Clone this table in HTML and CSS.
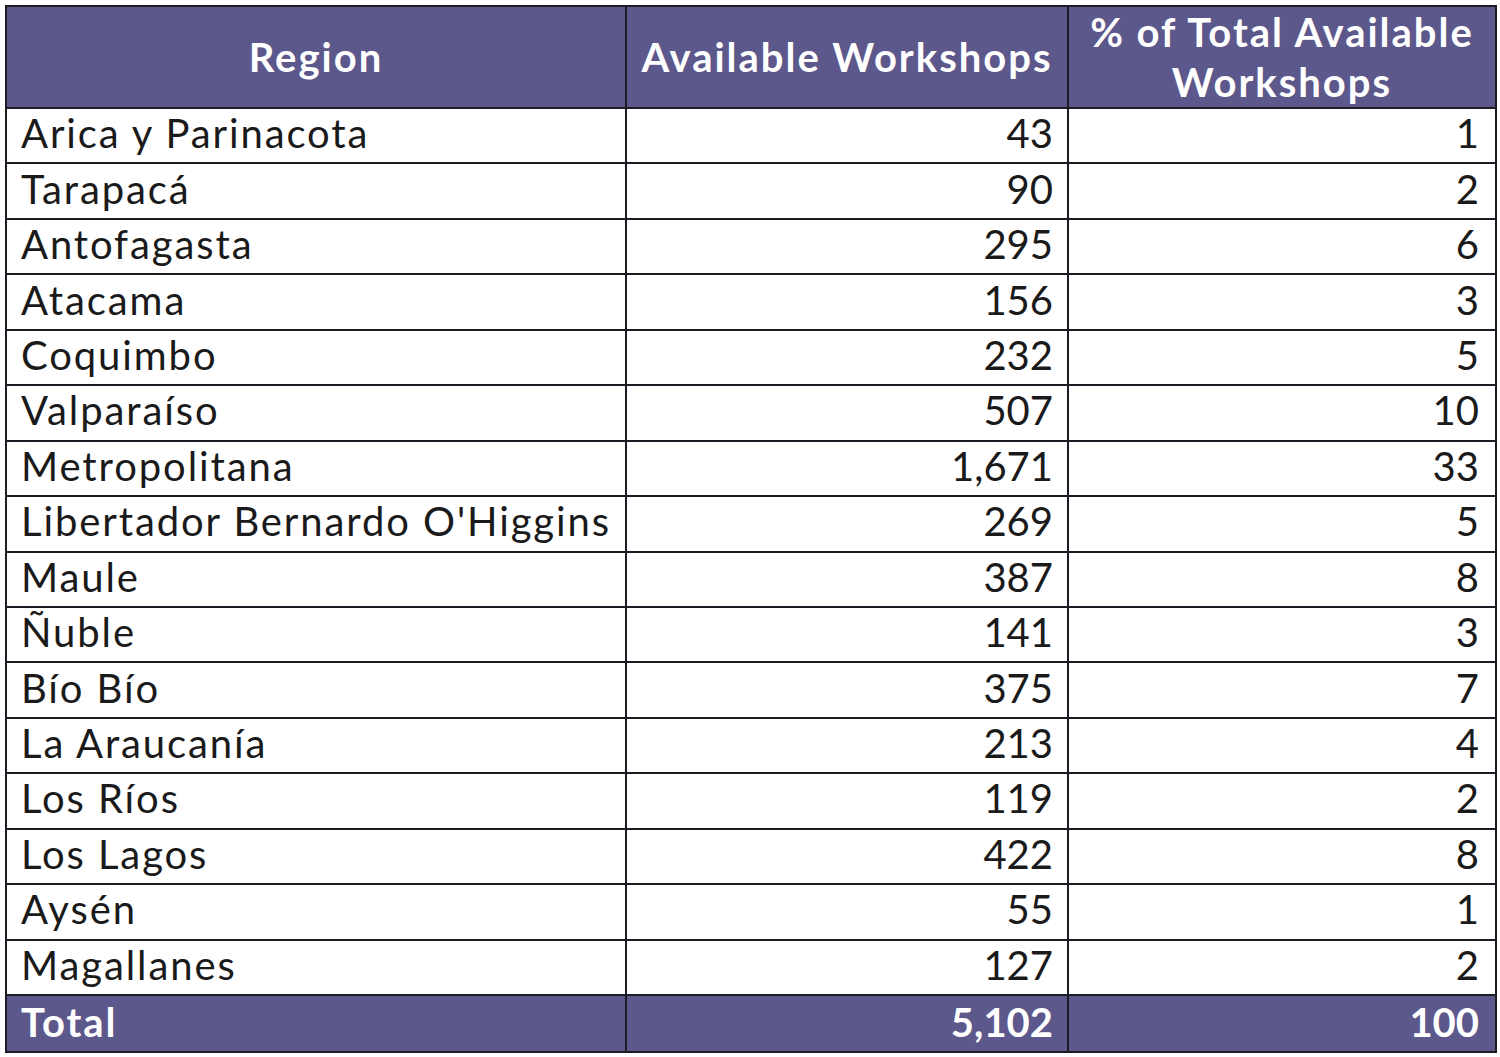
FILE: index.html
```html
<!DOCTYPE html>
<html>
<head>
<meta charset="utf-8">
<link rel="stylesheet" href="styles.css">
</head>
<body>
<table class="tbl">
  <colgroup>
    <col class="c1"><col class="c2"><col class="c3">
  </colgroup>
  <thead>
    <tr class="head">
      <th>Region</th>
      <th>Available Workshops</th>
      <th>% of Total Available Workshops</th>
    </tr>
  </thead>
  <tbody>
    <tr><td>Arica y Parinacota</td><td class="num">43</td><td class="num">1</td></tr>
    <tr><td>Tarapacá</td><td class="num">90</td><td class="num">2</td></tr>
    <tr><td>Antofagasta</td><td class="num">295</td><td class="num">6</td></tr>
    <tr><td>Atacama</td><td class="num">156</td><td class="num">3</td></tr>
    <tr><td>Coquimbo</td><td class="num">232</td><td class="num">5</td></tr>
    <tr><td>Valparaíso</td><td class="num">507</td><td class="num">10</td></tr>
    <tr><td>Metropolitana</td><td class="num">1,671</td><td class="num">33</td></tr>
    <tr><td>Libertador Bernardo O'Higgins</td><td class="num">269</td><td class="num">5</td></tr>
    <tr><td>Maule</td><td class="num">387</td><td class="num">8</td></tr>
    <tr><td>Ñuble</td><td class="num">141</td><td class="num">3</td></tr>
    <tr><td>Bío Bío</td><td class="num">375</td><td class="num">7</td></tr>
    <tr><td>La Araucanía</td><td class="num">213</td><td class="num">4</td></tr>
    <tr><td>Los Ríos</td><td class="num">119</td><td class="num">2</td></tr>
    <tr><td>Los Lagos</td><td class="num">422</td><td class="num">8</td></tr>
    <tr><td>Aysén</td><td class="num">55</td><td class="num">1</td></tr>
    <tr><td>Magallanes</td><td class="num">127</td><td class="num">2</td></tr>
  </tbody>
  <tfoot>
    <tr class="total"><td>Total</td><td class="num">5,102</td><td class="num">100</td></tr>
  </tfoot>
</table>
</body>
</html>
```
FILE: styles.css
```css
html, body {
  margin: 0;
  padding: 0;
  background: #ffffff;
}
body {
  padding: 5px;
  font-family: "Lato", "DejaVu Sans", sans-serif;
  color: #1a1a1a;
}
.tbl {
  border-collapse: collapse;
  table-layout: fixed;
  width: 1490px;
}
.c1 { width: 620px; }
.c2 { width: 442px; }
.c3 { width: 428px; }
.tbl th, .tbl td {
  border: 2px solid #1c1c24;
  overflow: hidden;
  white-space: nowrap;
}
.tbl td {
  font-size: 40px;
  letter-spacing: 1.9px;
  height: 48.44px;
  line-height: 44px;
  padding: 0 14px 5px 14px;
  text-align: left;
  vertical-align: middle;
}
.tbl td.num {
  text-align: right;
  letter-spacing: 0;
}
.tbl td.num:last-child {
  padding-right: 16px;
}
.head th {
  background: #5d588b;
  color: #ffffff;
  font-weight: 700;
  font-size: 40px;
  letter-spacing: 2px;
  line-height: 50px;
  height: 100px;
  text-align: center;
  white-space: normal;
  padding: 0 8px;
}
.total td {
  background: #5d588b;
  color: #ffffff;
  font-weight: 700;
  height: 52px;
  padding-bottom: 3px;
}
```
